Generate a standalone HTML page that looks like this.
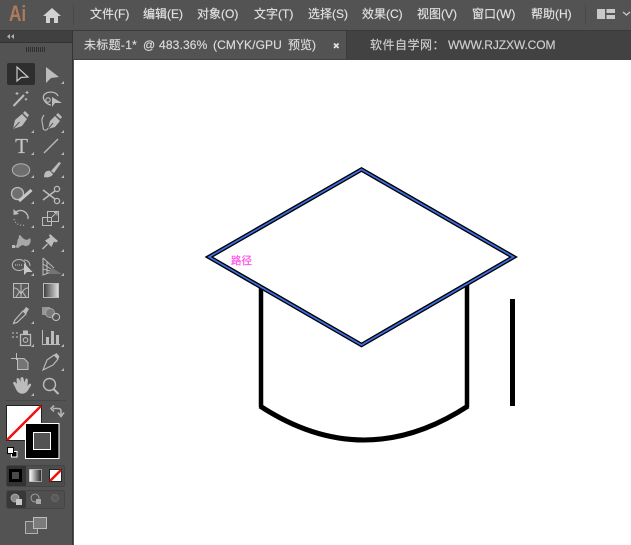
<!DOCTYPE html>
<html><head><meta charset="utf-8">
<style>
html,body{margin:0;padding:0;width:631px;height:545px;overflow:hidden;background:#535353}
body{position:relative;font-family:"Liberation Sans","Noto Sans CJK SC",sans-serif}
.m{position:absolute;top:6px;font-size:12px;line-height:16px;color:#e2e2e2;white-space:nowrap;-webkit-text-stroke:.15px #e2e2e2}
.t{top:37px;color:#dcdcdc;-webkit-text-stroke:.15px #dcdcdc}
.w{top:37px;color:#cfcfcf;-webkit-text-stroke:.15px #cfcfcf}
.b{position:absolute}
</style></head><body>
<div class="b" style="left:0;top:30px;width:631px;height:1px;background:#3a3a3a"></div>
<div class="b" style="left:0;top:31px;width:631px;height:29px;background:#424242"></div>
<div class="b" style="left:0;top:31px;width:72px;height:11px;background:#404040;border-bottom:1px solid #333"></div>
<div class="b" style="left:0;top:43px;width:72px;height:502px;background:#535353"></div>
<div class="b" style="left:72px;top:31px;width:1px;height:514px;background:#333"></div>
<div class="b" style="left:73px;top:31px;width:273px;height:28px;background:#535353;border-right:1px solid #3a3a3a"></div>
<div class="b" style="left:74px;top:60px;width:557px;height:485px;background:#fff"></div>

<div class="b" style="left:9px;top:-1px;font-size:22px;line-height:30px;font-weight:bold;color:#ad7b5c;transform:scaleX(.78);transform-origin:left">Ai</div>

<span class="m" style="left:90px">文件(F)</span>
<span class="m" style="left:143px">编辑(E)</span>
<span class="m" style="left:197px">对象(O)</span>
<span class="m" style="left:254px">文字(T)</span>
<span class="m" style="left:308px">选择(S)</span>
<span class="m" style="left:362px">效果(C)</span>
<span class="m" style="left:417px">视图(V)</span>
<span class="m" style="left:472px">窗口(W)</span>
<span class="m" style="left:531px">帮助(H)</span>

<span class="m t" style="left:84px;letter-spacing:.3px">未标题-1*</span>
<span class="m t" style="left:143px">@</span>
<span class="m t" style="left:159px;letter-spacing:.15px">483.36%</span>
<span class="m t" style="left:213px;letter-spacing:.1px">(CMYK/GPU</span>
<span class="m t" style="left:288px">预览)</span>
<span class="m w" style="left:370px;letter-spacing:.5px">软件自学网：</span>
<span class="m w" style="left:448px;letter-spacing:-.1px">WWW.RJZXW.COM</span>

<svg class="b" style="left:0;top:0" width="631" height="545" viewBox="0 0 631 545" xmlns="http://www.w3.org/2000/svg">
<!-- top bar -->
<path d="M43 16 L52 8 L61 16 L58 16 L58 23 L54 23 L54 18 L50 18 L50 23 L46 23 L46 16Z" fill="#d2d2d2"/>
<rect x="73" y="5" width="1" height="20" fill="#484848"/>
<rect x="585" y="5" width="1" height="20" fill="#484848"/>
<path d="M597 9h8v10h-8zM606.500 9h8.500v4h-8.500zM606.500 15h8.500v4h-8.500z" fill="#c8c8c8"/>
<path d="M623 12l3.500 3 3.500-3" fill="none" stroke="#c8c8c8" stroke-width="1.300"/>
<!-- tab close -->
<path d="M334 43.500l4.500 4.500M338.500 43.500l-4.500 4.500" stroke="#e2e2e2" stroke-width="1.800"/>
<!-- panel header -->
<path d="M10 34l-3 2.500 3 2.500zM14 34l-3 2.500 3 2.500z" fill="#b0b0b0"/>
<path d="M26.500 47v5M28.500 47v5M30.500 47v5M32.500 47v5M34.500 47v5M36.500 47v5M38.500 47v5M40.500 47v5M42.500 47v5M44.500 47v5" stroke="#2f2f2f" stroke-width="1"/>

<!-- selection highlight -->
<rect x="7" y="63" width="28" height="22" rx="2" fill="#2e2e2e"/>
<path d="M17 67 L17 81 L21 77.500 L28 77Z" fill="none" stroke="#c8c8c8" stroke-width="1.200"/>
<path d="M46 67 L46 83 L51 78 L59 77Z" fill="#bcbcbc"/>
<!-- wand -->
<path d="M13.500 106 L24 95" stroke="#bcbcbc" stroke-width="2"/>
<path d="M17 92v3M15.500 93.500h3M27 91v3M25.500 92.500h3M26 98v2.500M24.700 99.200h2.600" stroke="#bcbcbc" stroke-width="1"/>
<!-- lasso -->
<path d="M51 105 C45 104 42 98 44 95 C47 91 56 91 58 96" fill="none" stroke="#bcbcbc" stroke-width="1.300"/>
<circle cx="48" cy="100" r="2.200" fill="none" stroke="#bcbcbc" stroke-width="1.100"/>
<path d="M52 97 L52 107 L55 103 L62 103Z" fill="#bcbcbc"/>
<!-- pen -->
<path d="M13 129 L15 120 L22 114 L27 119 L22 126Z" fill="#bcbcbc"/>
<path d="M23 113 L25 111 L29 115 L27.500 117.500Z" fill="#bcbcbc"/>
<path d="M13.500 128.500 L19.500 122" stroke="#535353" stroke-width="1"/>
<!-- curvature -->
<path d="M44 115 C40 120 43 124 43 127 C43 131 47 131 48 128" fill="none" stroke="#bcbcbc" stroke-width="1.100"/>
<path d="M48 129 L50 121 L55 116 L60 121 L55 127Z" fill="#bcbcbc"/>
<path d="M56 115 L58 113 L62 117 L60.500 119Z" fill="#bcbcbc"/>
<path d="M48.500 128.500 L53 123" stroke="#535353" stroke-width="1"/>
<!-- type -->
<text x="21.500" y="153" text-anchor="middle" font-family="Liberation Serif,serif" font-size="21" fill="#c4c4c4" stroke="#c4c4c4" stroke-width=".2">T</text>
<!-- line -->
<path d="M44 153 L58 139" stroke="#bcbcbc" stroke-width="1.300"/>
<!-- ellipse -->
<ellipse cx="21" cy="170" rx="8.700" ry="6.300" fill="#6e6e6e" stroke="#b0b0b0" stroke-width="1"/>
<!-- brush -->
<path d="M44 177 C44 172 47 170 50 171 L53 174 C52 177 47 178 44 177Z" fill="#bcbcbc"/>
<path d="M51 171 L59 162 L61 163 L54 173Z" fill="#bcbcbc"/>
<!-- shaper -->
<circle cx="17.500" cy="193.500" r="6" fill="#707070" stroke="#bcbcbc" stroke-width="1.300"/>
<path d="M19 201 L31.500 190" stroke="#c8c8c8" stroke-width="3"/>
<!-- scissors -->
<path d="M43 190 L55 199 M43 200 L55 191" stroke="#bcbcbc" stroke-width="1.500"/>
<circle cx="57" cy="189" r="2.600" fill="none" stroke="#bcbcbc" stroke-width="1.300"/>
<circle cx="57" cy="201" r="2.600" fill="none" stroke="#bcbcbc" stroke-width="1.300"/>
<!-- rotate -->
<path d="M16 212 C22 208 29 213 28 219" fill="none" stroke="#bcbcbc" stroke-width="1.400"/>
<path d="M13.500 209 L13.500 215 L19 214Z" fill="#bcbcbc"/>
<path d="M14 219 C15 224 20 226 25 225" fill="none" stroke="#bcbcbc" stroke-width="1.100" stroke-dasharray="1 2"/>
<!-- scale -->
<path d="M42.500 217.500h9v8h-9zM47.500 211.500h11v10h-11z" fill="none" stroke="#bcbcbc" stroke-width="1"/>
<path d="M52 217 L57 212M54 212.500h3v3" fill="none" stroke="#bcbcbc"/>
<!-- warp -->
<path d="M14 247 C19 245 16 240 19 238 C18 236 20 234 21 236 C24 240 27 241 30 238 C32 242 29 247 25 246 C22 244 21 246 18 248Z" fill="#a8a8a8"/>
<rect x="12" y="245" width="3" height="3" fill="#bcbcbc"/>
<!-- pin -->
<path d="M42.500 249 L47.500 244" stroke="#bcbcbc" stroke-width="1.300"/>
<path d="M50 234 L58 241 L56 242.500 L54 241.500 L51.500 247 L45 240.500 L50 237.500 L49 235.500Z" fill="#bcbcbc"/>
<!-- shape builder -->
<ellipse cx="19" cy="265" rx="6.700" ry="5.500" fill="none" stroke="#bcbcbc" stroke-width="1"/>
<path d="M24 260 C28 260 30 263 30 266" fill="none" stroke="#bcbcbc" stroke-width="1"/>
<path d="M24 263 L24 275 L27 272 L32.500 272Z" fill="#c8c8c8"/>
<path d="M15 265h8" stroke="#c8c8c8" stroke-dasharray="1 1"/>
<!-- perspective grid -->
<path d="M43 258 L43 275 L51 272 M43 258 L54 268 M43 264 L51 269 M43 269 L50 271 M47 261 L47 273" fill="none" stroke="#bcbcbc" stroke-width="1"/>
<path d="M52 268 L62 274 L48 274Z" fill="#757575"/>
<!-- mesh -->
<rect x="13.500" y="283.500" width="15" height="14" fill="#5b5b5b" stroke="#bcbcbc"/>
<path d="M21 283 V297 M14 288 C18 288 19 291 21 294 M28 288 C24 288 23 291 21 294 M16 297 L20 291 M26 297 L22 291" fill="none" stroke="#bcbcbc" stroke-width="1"/>
<!-- gradient -->
<defs>
<linearGradient id="g1"><stop offset="0" stop-color="#3b3b3b"/><stop offset="1" stop-color="#e0e0e0"/></linearGradient>
<linearGradient id="g2"><stop offset="0" stop-color="#fff"/><stop offset="1" stop-color="#222"/></linearGradient>
</defs>
<rect x="43.500" y="283.500" width="15" height="14" fill="url(#g1)" stroke="#bcbcbc"/>
<!-- eyedropper -->
<path d="M15 320 L23 311 L26 314 L17 322.500 L13.500 323.500Z" fill="none" stroke="#bcbcbc" stroke-width="1.200"/>
<path d="M23 311 L26 307 L29 309 L26 314Z" fill="#bcbcbc"/>
<!-- blend -->
<rect x="42" y="307" width="8" height="8" fill="#969696"/>
<circle cx="50" cy="313" r="4.500" fill="#7a7a7a" stroke="#a8a8a8"/>
<circle cx="56" cy="317" r="3.600" fill="none" stroke="#bcbcbc" stroke-width="1.100"/>
<!-- symbol sprayer -->
<path d="M20.500 334.500h10v11h-10z" fill="none" stroke="#bcbcbc" stroke-width="1.300"/>
<path d="M23 330.500h5v4h-5z" fill="#bcbcbc"/>
<circle cx="25.500" cy="340" r="2.300" fill="none" stroke="#bcbcbc" stroke-width="1.100"/>
<path d="M12 332h2v2h-2zM16 332h2v2h-2zM12 336h2v2h-2zM16 336h2v2h-2z" fill="#8e8e8e"/>
<!-- graph -->
<path d="M42.500 330 V344.500 H60" fill="none" stroke="#bcbcbc"/>
<path d="M46 337h3v7h-3zM51 331h3v13h-3zM56 335h3v9h-3z" fill="#bcbcbc"/>
<!-- artboard -->
<path d="M11 358.500h9M16.500 353v7" stroke="#bcbcbc"/>
<path d="M17.500 358.500h6.500l4 4v7H17.500z" fill="#757575" stroke="#bcbcbc"/>
<!-- slice -->
<path d="M43 370 L47 360 L54 355 L58 359 L53 365Z" fill="none" stroke="#bcbcbc" stroke-width="1.100"/>
<path d="M54 355 L56.500 353 L59.500 356.500 L58 359Z" fill="#bcbcbc"/>
<!-- hand -->
<path d="M15.500 388 L13 383 C13.500 381 16 382 17 384 L16.500 379 C17 377.500 19 378 19.500 379.500 L20.500 382 L20.500 378 C21.500 376.500 23.500 377 23.500 378.500 L24.500 382.500 L25.500 379 C26.500 378 28 378.500 27.800 380.500 L27.500 386 L29 384 C30.500 383 31.500 384 31 385.500 L27.500 391 C24.500 395 18 395 15.500 388Z" fill="#bcbcbc"/>
<!-- zoom -->
<circle cx="49.500" cy="384.500" r="6" fill="none" stroke="#bcbcbc" stroke-width="1.400"/>
<path d="M53.500 389 L58.500 394" stroke="#bcbcbc" stroke-width="2"/>
<!-- small triangles -->
<path d="M64 84v-3l-3 3zM34 133v-3l-3 3zM64 133v-3l-3 3zM34 155v-3l-3 3zM64 155v-3l-3 3zM34 178v-3l-3 3zM64 178v-3l-3 3zM34 204v-3l-3 3zM64 204v-3l-3 3zM34 228v-3l-3 3zM64 228v-3l-3 3zM34 252v-3l-3 3zM64 252v-3l-3 3zM34 276v-3l-3 3zM64 276v-3l-3 3zM34 324v-3l-3 3zM34 347v-3l-3 3zM64 347v-3l-3 3zM64 371v-3l-3 3zM34 396v-3l-3 3z" fill="#b8b8b8"/>
<rect x="6" y="400" width="60" height="1" fill="#484848"/>

<!-- fill/stroke -->
<rect x="6.500" y="405.500" width="35" height="35" fill="#fff" stroke="#222"/>
<path d="M7 440 L41 406" stroke="#f01010" stroke-width="2.500"/>
<path d="M53 408.500 L58 408.500 Q61 408.500 61 411 L61 415M58 412.500 L61 416.500 L64 412.500M54 405.500 L51 408.500 L54 411.500" fill="none" stroke="#b4b4b4" stroke-width="1.600"/>
<rect x="25.500" y="423.500" width="33.500" height="35" fill="#000" stroke="#fff" stroke-width="1"/>
<rect x="33.500" y="432.500" width="17" height="17" fill="#535353" stroke="#fff"/>
<rect x="11.500" y="451.500" width="5.500" height="5.500" fill="#000" stroke="#fff"/>
<rect x="7.500" y="447.500" width="6" height="6" fill="#fff" stroke="#000"/>
<!-- color modes -->
<rect x="6.500" y="465.500" width="58" height="21" rx="2" fill="#4c4c4c" stroke="#444"/>
<rect x="7" y="466" width="19" height="20" fill="#333"/>
<rect x="9" y="469" width="13" height="13" fill="#000"/>
<rect x="12" y="472" width="7" height="7" fill="#4a4a4a"/>
<rect x="29.500" y="469.500" width="12" height="12" fill="url(#g2)" stroke="#ddd" stroke-width=".6"/>
<rect x="49.500" y="469.500" width="12" height="12" fill="#fff" stroke="#222"/>
<path d="M50 481 L61 470" stroke="#f01010" stroke-width="2.500"/>
<!-- draw modes -->
<rect x="6.500" y="490.500" width="58" height="18" rx="2" fill="#4f4f4f" stroke="#454545"/>
<rect x="7" y="491" width="19" height="17" rx="2" fill="#383838"/>
<circle cx="15" cy="498" r="4" fill="#888" stroke="#b0b0b0" stroke-width=".8"/>
<rect x="16" y="499" width="6" height="6" fill="#c8c8c8"/>
<circle cx="35" cy="498" r="4" fill="#505050" stroke="#b0b0b0" stroke-width=".8"/>
<rect x="36" y="499" width="5" height="5" fill="#a8a8a8"/>
<circle cx="55" cy="498" r="3.500" fill="#5a5a5a" stroke="#6e6e6e" stroke-width=".8"/>
<!-- screen mode -->
<rect x="25.500" y="521.500" width="12" height="12" fill="#666" stroke="#b0b0b0"/>
<rect x="33.500" y="517.500" width="13" height="11" fill="#7c7c7c" stroke="#bcbcbc"/>

<!-- artwork -->
<g fill="none" stroke="#000" stroke-linecap="butt">
<path d="M261 288 V407" stroke-width="4.500"/>
<path d="M467 285 V407" stroke-width="4.500"/>
<path d="M512.500 299 V406" stroke-width="5"/>
<path d="M260 406 Q364 474 468 406" stroke-width="5"/>
</g>
<path d="M361.500 169.500 L513.500 257 L361.500 345 L209 257Z" fill="#fff" stroke="#000" stroke-width="4.400" stroke-linejoin="miter"/>
<path d="M361.500 169.500 L513.500 257 L361.500 345 L209 257Z" fill="none" stroke="#3f6fe6" stroke-width="1.700"/>
</svg>
<div class="b" style="left:231px;top:255px;font-size:10.500px;line-height:12px;color:#ff4fe8;-webkit-text-stroke:.2px #ff4fe8">路径</div>
</body></html>
